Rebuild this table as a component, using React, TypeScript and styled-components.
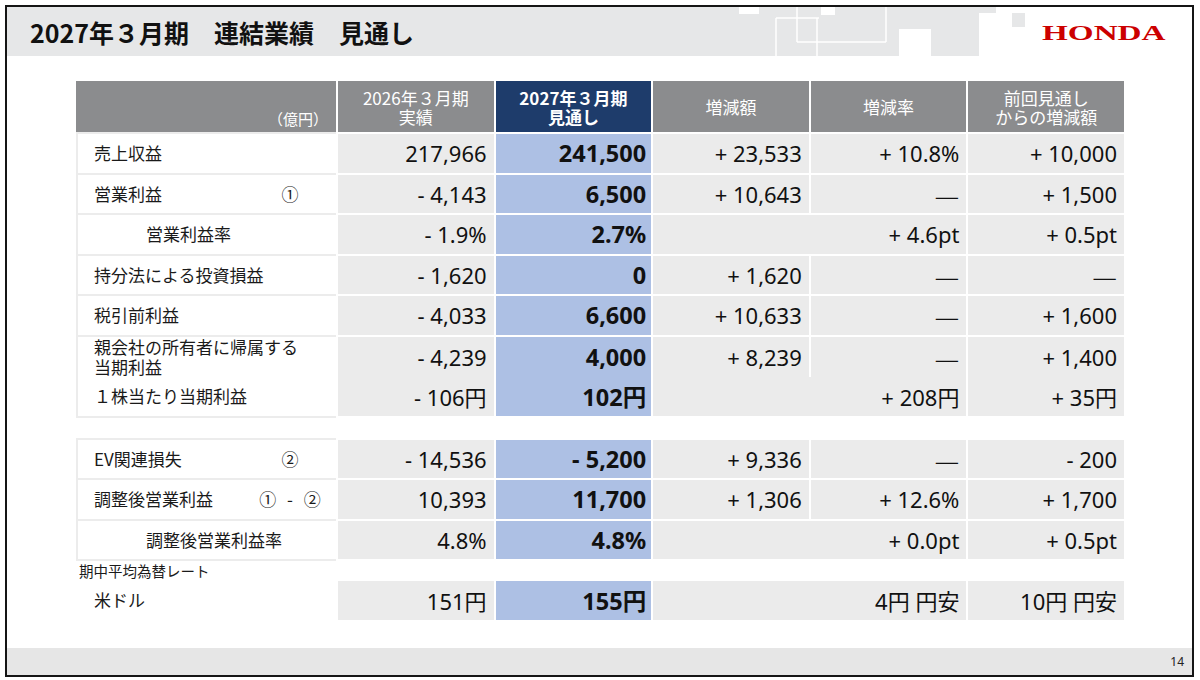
import { createGlobalStyle } from "styled-components"
import styled from "styled-components"

const GlobalStyle = createGlobalStyle`
  html, body {
    margin: 0;
    padding: 0;
    background: #ffffff;
  }
  body {
    font-family: "Noto Sans CJK JP", "Noto Sans", sans-serif;
    color: #1a1a1a;
  }
`

const Page = styled.div`
  width: 1200px;
  height: 680px;
  padding: 5px 6px 3px 5px;
  box-sizing: border-box;
`

const Slide = styled.div`
  width: 1189px;
  height: 672px;
  border: 2px solid #151515;
  box-sizing: border-box;
  display: flex;
  flex-direction: column;
  background: #ffffff;
`

const Header = styled.div`
  height: 49px;
  display: flex;
  flex-shrink: 0;
`

const TitleBar = styled.div`
  flex: 1;
  background: #e6e7e8;
  display: flex;
  align-items: center;
  padding-left: 23px;
`

const Title = styled.h1`
  margin: 0;
  font-size: 25px;
  font-weight: 700;
  color: #111111;
  font-family: "Noto Sans CJK JP", sans-serif;
`

const Pattern = styled.svg`
  display: block;
  flex-shrink: 0;
`

const LogoBox = styled.div`
  flex: 0 0 163px;
  box-sizing: border-box;
  display: flex;
  align-items: center;
  padding-left: 13px;
  padding-top: 2px;
`

const Logo = styled.span`
  display: inline-block;
  font-family: "Liberation Serif", serif;
  font-weight: 700;
  font-size: 20px;
  line-height: 1;
  color: #cc0000;
  transform: scaleX(1.66);
  transform-origin: left center;
`

const Body = styled.div`
  flex: 1;
  padding: 25px 0 0 69px;
`

const Table = styled.div`
  width: 1048px;
  display: flex;
  flex-direction: column;
  gap: 2px;
`

const Row = styled.div<{ $h?: number }>`
  display: grid;
  grid-template-columns: 260px repeat(5, 1fr);
  column-gap: 2px;
  height: ${(p) => p.$h ?? 38.5}px;
`

const HeadCell = styled.div<{ $tone?: "gray" | "navy" }>`
  background: ${(p) => (p.$tone === "navy" ? "#1e3c6b" : "#8b8c8e")};
  color: #ffffff;
  display: flex;
  flex-direction: column;
  align-items: center;
  justify-content: center;
  font-size: 17px;
  line-height: 19px;
  font-weight: ${(p) => (p.$tone === "navy" ? 700 : 400)};
`

const UnitCell = styled.div`
  background: #8b8c8e;
  color: #ffffff;
  display: flex;
  align-items: flex-end;
  justify-content: flex-end;
  font-size: 15px;
  line-height: 18px;
  padding: 0 8px 4px 0;
`

const LabelCell = styled.div<{ $indent?: boolean; $plain?: boolean; $first?: boolean }>`
  background: #ffffff;
  display: flex;
  align-items: center;
  padding-left: ${(p) => (p.$indent ? 70 : 18)}px;
  font-size: 17px;
  line-height: 20px;
  color: #1a1a1a;
  box-shadow: ${(p) =>
    p.$plain
      ? "none"
      : `inset 2px 0 0 #ececec, 0 2px 0 #ececec${p.$first ? ", 0 -2px 0 #ececec" : ""}`};
`

const LabelText = styled.span`
  flex: 1;
`

const Marker = styled.span`
  width: 80px;
  margin-right: 6px;
  text-align: center;
  font-size: 17px;
  word-spacing: 7px;
`

const NumCell = styled.div<{ $focus?: boolean; $span?: number }>`
  grid-column: span ${(p) => p.$span ?? 1};
  background: ${(p) => (p.$focus ? "#adc0e4" : "#ebebeb")};
  display: flex;
  align-items: center;
  justify-content: flex-end;
  padding-right: ${(p) => (p.$focus ? 5 : 7)}px;
  font-family: "Noto Sans", "Noto Sans CJK JP", sans-serif;
  font-size: ${(p) => (p.$focus ? 23.5 : 22)}px;
  font-weight: ${(p) => (p.$focus ? 700 : 400)};
  color: #111111;
  white-space: pre;
`

const Dash = styled.span`
  font-family: "Noto Sans CJK JP", sans-serif;
  font-size: 28px;
  font-weight: 300;
  line-height: 1;
`

const Spacer = styled.div<{ $h: number }>`
  height: ${(p) => p.$h}px;
`

const Caption = styled.div`
  height: 18px;
  display: flex;
  align-items: center;
  padding-left: 3px;
  font-size: 14.5px;
  color: #1a1a1a;
`

const Footer = styled.div`
  height: 27px;
  flex-shrink: 0;
  background: #e6e6e6;
  display: flex;
  align-items: center;
  justify-content: flex-end;
  padding-right: 8px;
  font-family: "Noto Sans", sans-serif;
  font-size: 12px;
  color: #222222;
`

type Line = {
  label: React.ReactNode
  marker?: string
  indent?: boolean
  plain?: boolean
  first?: boolean
  prev: string
  next: string
  diff?: string
  rate: string
  vsPrev: string
  merge?: boolean
}

const groupA: Line[] = [
  { label: "売上収益", first: true, prev: "217,966", next: "241,500", diff: "+ 23,533", rate: "+ 10.8%", vsPrev: "+ 10,000" },
  { label: "営業利益", marker: "①", prev: "- 4,143", next: "6,500", diff: "+ 10,643", rate: "—", vsPrev: "+ 1,500" },
  { label: "営業利益率", indent: true, prev: "- 1.9%", next: "2.7%", rate: "+ 4.6pt", vsPrev: "+ 0.5pt", merge: true },
  { label: "持分法による投資損益", prev: "- 1,620", next: "0", diff: "+ 1,620", rate: "—", vsPrev: "—" },
  { label: "税引前利益", prev: "- 4,033", next: "6,600", diff: "+ 10,633", rate: "—", vsPrev: "+ 1,600" },
  {
    label: (
      <>
        親会社の所有者に帰属する
        <br />
        当期利益
      </>
    ),
    prev: "- 4,239",
    next: "4,000",
    diff: "+ 8,239",
    rate: "—",
    vsPrev: "+ 1,400",
  },
  { label: "１株当たり当期利益", prev: "- 106円", next: "102円", rate: "+ 208円", vsPrev: "+ 35円", merge: true },
]

const groupB: Line[] = [
  { label: "EV関連損失", marker: "②", first: true, prev: "- 14,536", next: "- 5,200", diff: "+ 9,336", rate: "—", vsPrev: "- 200" },
  { label: "調整後営業利益", marker: "① - ②", prev: "10,393", next: "11,700", diff: "+ 1,306", rate: "+ 12.6%", vsPrev: "+ 1,700" },
  { label: "調整後営業利益率", indent: true, prev: "4.8%", next: "4.8%", rate: "+ 0.0pt", vsPrev: "+ 0.5pt", merge: true },
]

const fx: Line = { label: "米ドル", plain: true, prev: "151円", next: "155円", rate: "4円 円安", vsPrev: "10円 円安", merge: true }

const Value = ({ v }: { v?: string }) => (v === "—" ? <Dash>—</Dash> : <>{v}</>)

const DataRow = ({ line }: { line: Line }) => (
  <Row>
    <LabelCell $indent={line.indent} $plain={line.plain} $first={line.first}>
      <LabelText>{line.label}</LabelText>
      {line.marker && <Marker>{line.marker}</Marker>}
    </LabelCell>
    <NumCell>{line.prev}</NumCell>
    <NumCell $focus>{line.next}</NumCell>
    {line.merge ? (
      <NumCell $span={2}>
        <Value v={line.rate} />
      </NumCell>
    ) : (
      <>
        <NumCell>
          <Value v={line.diff} />
        </NumCell>
        <NumCell>
          <Value v={line.rate} />
        </NumCell>
      </>
    )}
    <NumCell>
      <Value v={line.vsPrev} />
    </NumCell>
  </Row>
)

// header decoration: grey blocks with thin white rules
const HeaderPattern = () => (
  <Pattern width="300" height="49" viewBox="0 0 300 49">
    <rect x="0" y="0" width="170" height="49" fill="#e6e7e8" />
    <rect x="10" y="0" width="20" height="7" fill="#ffffff" />
    <rect x="92" y="0" width="14" height="8" fill="#ffffff" />
    <g stroke="#ffffff" strokeWidth="1.5" fill="none">
      <line x1="47" y1="11" x2="47" y2="49" />
      <line x1="47" y1="11" x2="90" y2="11" />
      <line x1="68" y1="0" x2="68" y2="35" />
      <line x1="68" y1="35" x2="157" y2="35" />
      <line x1="88" y1="11" x2="88" y2="49" />
      <line x1="157" y1="0" x2="157" y2="35" />
    </g>
    <rect x="170" y="0" width="32" height="22" fill="#e6e7e8" />
    <rect x="202" y="0" width="48" height="49" fill="#e6e7e8" />
    <rect x="243" y="0" width="24" height="6" fill="#e6e7e8" />
    <rect x="283" y="6" width="13" height="14" fill="#e6e7e8" />
  </Pattern>
)

export default function App() {
  return (
    <>
      <GlobalStyle />
      <Page>
        <Slide>
          <Header>
            <TitleBar>
              <Title>2027年３月期　連結業績　見通し</Title>
            </TitleBar>
            <HeaderPattern />
            <LogoBox>
              <Logo>HONDA</Logo>
            </LogoBox>
          </Header>
          <Body>
            <Table>
              <Row $h={51}>
                <UnitCell>（億円）</UnitCell>
                <HeadCell>
                  <span>2026年３月期</span>
                  <span>実績</span>
                </HeadCell>
                <HeadCell $tone="navy">
                  <span>2027年３月期</span>
                  <span>見通し</span>
                </HeadCell>
                <HeadCell>増減額</HeadCell>
                <HeadCell>増減率</HeadCell>
                <HeadCell>
                  <span>前回見通し</span>
                  <span>からの増減額</span>
                </HeadCell>
              </Row>
              {groupA.map((line, i) => (
                <DataRow key={`a${i}`} line={line} />
              ))}
              <Spacer $h={20} />
              {groupB.map((line, i) => (
                <DataRow key={`b${i}`} line={line} />
              ))}
              <Caption>期中平均為替レート</Caption>
              <DataRow line={fx} />
            </Table>
          </Body>
          <Footer>14</Footer>
        </Slide>
      </Page>
    </>
  )
}
